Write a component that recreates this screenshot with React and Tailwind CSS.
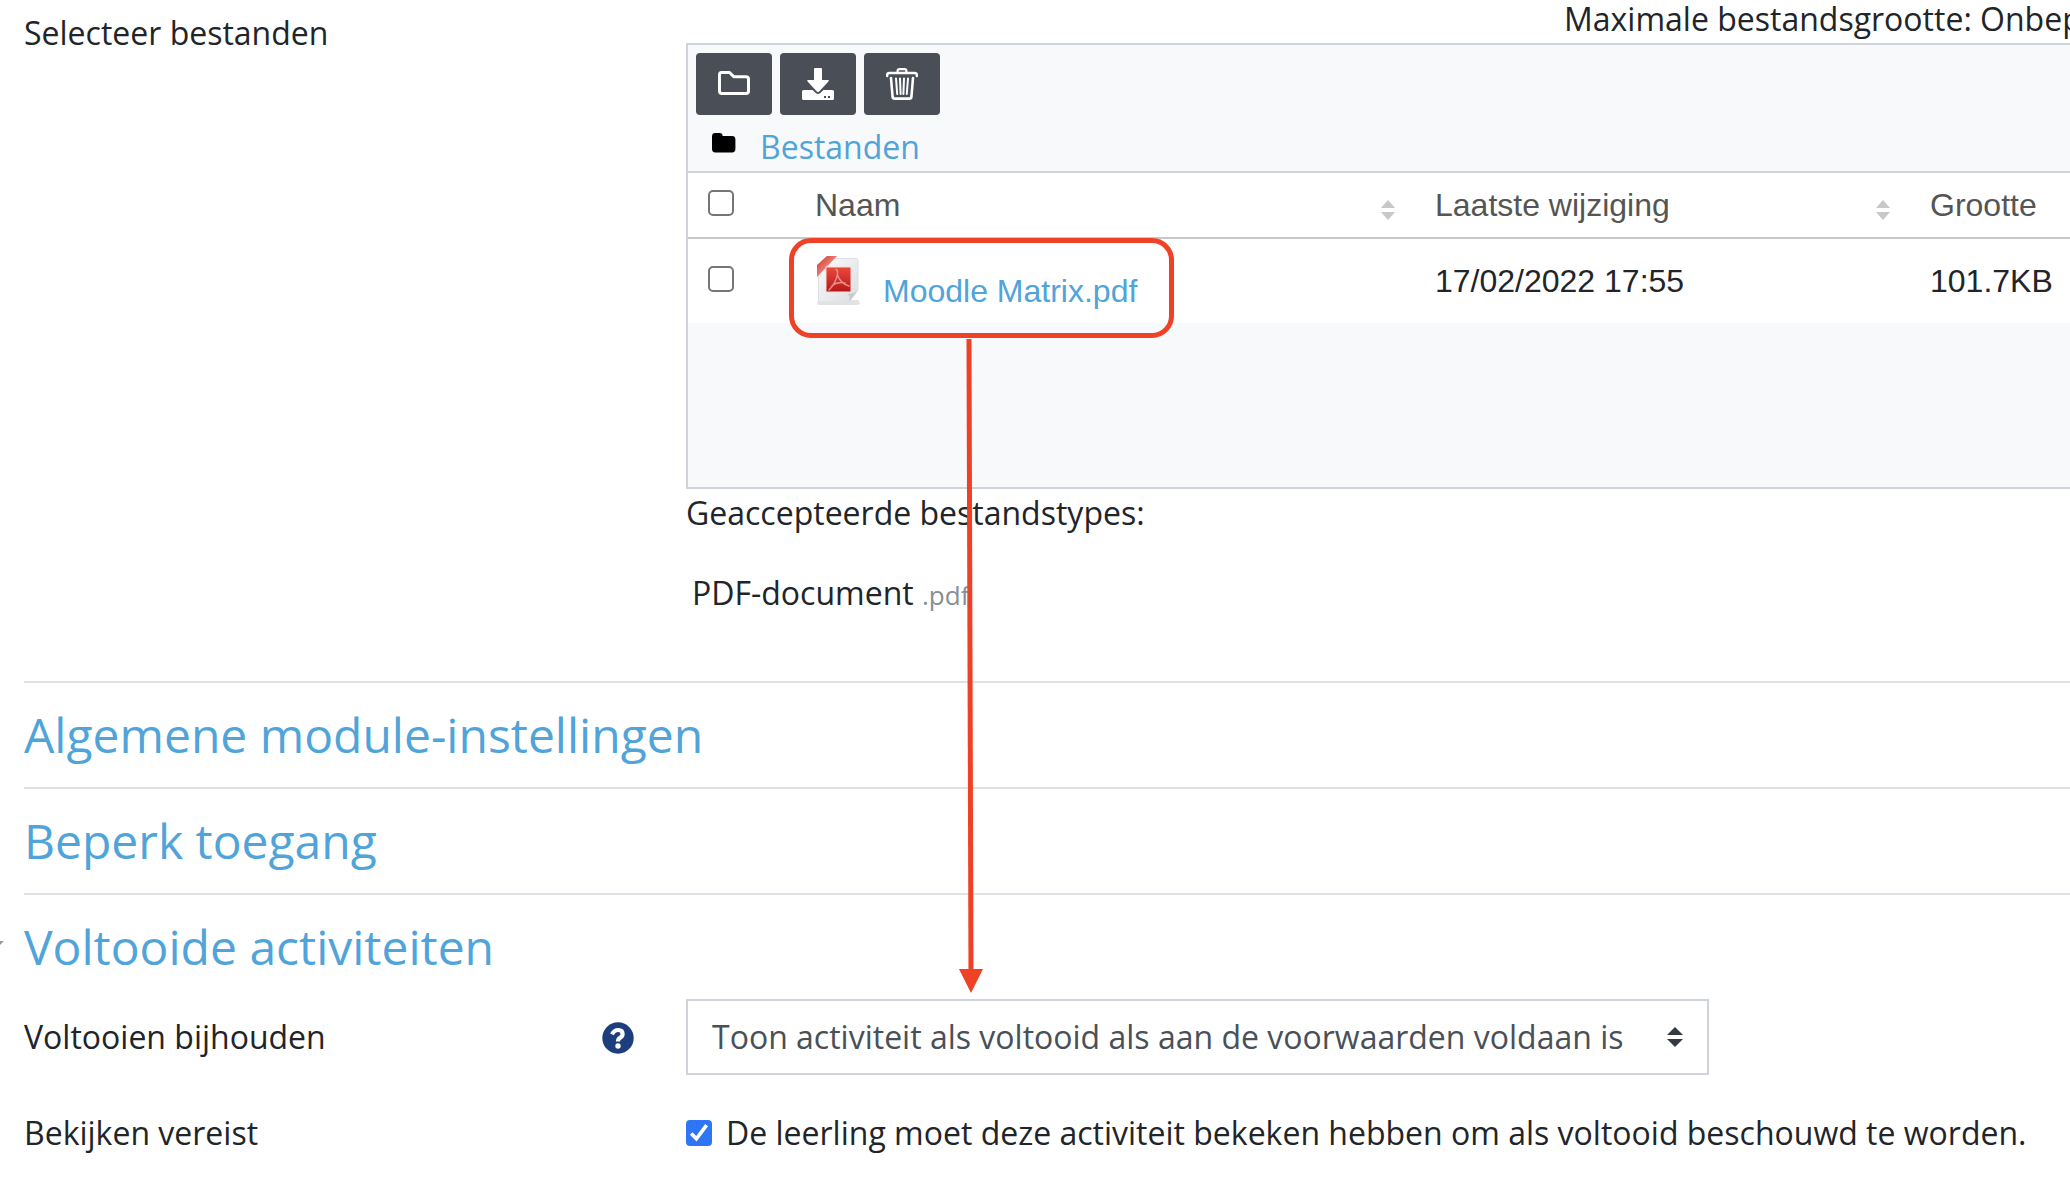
import React from "react";

const files = [
  { name: "Moodle Matrix.pdf", modified: "17/02/2022 17:55", size: "101.7KB" },
];

function FolderOutlineIcon() {
  return (
    <svg viewBox="0 0 32 26" className="h-[26px] w-8" fill="none" stroke="#fff" strokeWidth="3" strokeLinejoin="round" aria-hidden="true">
      <path d="M3.500 1.500H11.500L16 5.800H28Q30.500 5.800 30.500 8.200V20Q30.500 22.500 28 22.500H4Q1.500 22.500 1.500 20V4Q1.500 1.500 3.500 1.500Z" />
    </svg>
  );
}

function DownloadIcon() {
  return (
    <svg viewBox="0 0 32 32" className="size-8" aria-hidden="true">
      <path
        fill="#fff"
        d="M13 0H19Q20 0 20 1V12H26Q27.6 12 26.4 13.4L17.2 23.4Q16 24.6 14.8 23.4L5.6 13.4Q4.4 12 6 12H12V1Q12 0 13 0Z"
      />
      <path
        fill="#fff"
        d="M1.6 22H10.6L14 25.3Q16 26.8 18 25.3L21.4 22H30.4Q32 22 32 23.6V30.4Q32 32 30.4 32H1.6Q0 32 0 30.4V23.6Q0 22 1.6 22Z"
      />
      <path fill="#4a4f57" d="M22 28h2v2h-2zM26 28h2v2h-2z" />
    </svg>
  );
}

function TrashIcon() {
  return (
    <svg viewBox="0 0 32 32" className="size-8" fill="none" stroke="#fff" strokeLinecap="round" strokeLinejoin="round" aria-hidden="true">
      <path strokeWidth="2.4" d="M1.2 8V7Q1.2 5 3.4 5H28.6Q30.8 5 30.8 7V8" />
      <path strokeWidth="2.2" d="M11.6 4V3Q11.6 1.2 13.4 1.2H18.6Q20.4 1.2 20.4 3V4" />
      <path strokeWidth="2.6" d="M5 10L6.6 29Q6.8 30.6 8.6 30.6H23.4Q25.2 30.6 25.4 29L27 10" />
      <path strokeWidth="2" d="M10 10.5L11.2 26M14 10.5L14.6 26M18 10.5L17.4 26M22 10.5L20.8 26" />
    </svg>
  );
}

function FolderIcon() {
  return (
    <svg viewBox="0 0 24 20" className="h-5 w-6" aria-hidden="true">
      <path d="M3.4 0H7.6Q10.6 0 10.6 3H20Q23.4 3 23.4 6.4V16Q23.4 19.4 20 19.4H3.4Q0 19.4 0 16V3.4Q0 0 3.4 0Z" />
    </svg>
  );
}

function PdfIcon() {
  return (
    <svg viewBox="0 0 46 50" className="h-[50px] w-[46px]" aria-hidden="true">
      <defs>
        <linearGradient id="paper" x1="0" y1="0" x2="1" y2="1">
          <stop offset="0" stopColor="#fbfbfc" />
          <stop offset="1" stopColor="#dcdde2" />
        </linearGradient>
        <linearGradient id="badge" x1="0" y1="0" x2="0" y2="1">
          <stop offset="0" stopColor="#ea4a3c" />
          <stop offset="1" stopColor="#b5171a" />
        </linearGradient>
        <linearGradient id="ribbon" x1="0" y1="0" x2="1" y2="1">
          <stop offset="0" stopColor="#c8332d" />
          <stop offset="0.5" stopColor="#ee7a70" />
          <stop offset="1" stopColor="#c9302b" />
        </linearGradient>
      </defs>
      <path fill="#cfcfd1" d="M3 44H43L45 47Q45 49 43 49H4Q2 49 2 47Z" opacity="0.6" />
      <path fill="url(#paper)" stroke="#dfe0e6" strokeWidth="1" d="M9 2.500H41Q43 2.500 43 4.500V34L34 46H6Q3.500 46 3.500 43.500V9Z" />
      <path fill="#c9cad0" d="M43 34L34 46Q35.500 40 33 38Q39 38 43 34Z" />
      <path fill="url(#ribbon)" d="M12 0H22L2 21V9Z" />
      <path fill="url(#badge)" stroke="#f6dcda" strokeWidth="1" d="M11 11H36V36H11Z" />
      <path fill="none" stroke="#ee9088" strokeWidth="1.500" strokeLinecap="round" d="M21 13.500Q23 14 22.500 18Q21 27 14 34M22.500 19Q25 27 34 30M17 29.500Q23 25.500 30 27" />
    </svg>
  );
}

function SortIcon() {
  return (
    <svg viewBox="0 0 14 20" className="h-5 w-[14px]" fill="#c8c8c8" aria-hidden="true">
      <path d="M7 0L14 8H0ZM7 20L0 12H14Z" />
    </svg>
  );
}

function HelpIcon() {
  return (
    <svg viewBox="0 0 32 32" className="size-8" aria-hidden="true">
      <circle cx="16" cy="16" r="15.700" fill="#1d3d7c" />
      <path fill="none" stroke="#fff" strokeWidth="4.200" d="M10 12.400Q12 8 16.200 8Q20.600 8 20.600 12Q20.600 14.400 18 15.800Q16 17 16 19.400" />
      <circle cx="16" cy="24" r="2.700" fill="#fff" />
    </svg>
  );
}

function ToolButton({ label, children }) {
  return (
    <button type="button" aria-label={label} className="flex h-[62px] w-[76px] items-center justify-center rounded bg-[#4a4f57]">
      {children}
    </button>
  );
}

function Tick({ label }) {
  return (
    <input
      type="checkbox"
      aria-label={label}
      className="block size-[26px] appearance-none rounded-[5px] border-2 border-[#767676] bg-white"
    />
  );
}

function SortHeader({ children }) {
  return (
    <th className="p-0 text-left font-normal">
      <div className="flex items-center justify-between pr-10">
        <span>{children}</span>
        <span className="pt-[10px]">
          <SortIcon />
        </span>
      </div>
    </th>
  );
}

function SectionHeading({ children }) {
  return (
    <h2 className="flex h-[106px] items-center border-t-2 border-[#dee2e6] text-5xl leading-[60px]">
      <a href="#" className="text-[#50a4d9]">{children}</a>
    </h2>
  );
}

function FileManager() {
  return (
    <div className="h-[446px] border-2 border-r-0 border-[#ced4da] bg-[#f8f9fb]">
      <div className="flex gap-2 px-2 pt-2">
        <ToolButton label="Map aanmaken"><FolderOutlineIcon /></ToolButton>
        <ToolButton label="Alles downloaden"><DownloadIcon /></ToolButton>
        <ToolButton label="Verwijderen"><TrashIcon /></ToolButton>
      </div>
      <div className="flex h-14 items-center gap-6 pl-6">
        <FolderIcon />
        <a href="#" className="pt-2 leading-[48px] text-[#50a4d9]">Bestanden</a>
      </div>
      <table className="w-full table-fixed border-collapse border-t-2 border-[#ced4da] bg-white font-['Liberation_Sans',Arial,sans-serif]">
        <colgroup>
          <col className="w-[127px]" />
          <col className="w-[620px]" />
          <col className="w-[495px]" />
          <col />
        </colgroup>
        <thead>
          <tr className="h-[66px] border-b-2 border-[#c8c8c8] text-[#555]">
            <th className="p-0 pb-1 pl-5"><Tick label="Alles selecteren" /></th>
            <SortHeader>Naam</SortHeader>
            <SortHeader>Laatste wijziging</SortHeader>
            <th className="p-0 text-left font-normal">Grootte</th>
          </tr>
        </thead>
        <tbody>
          {files.map((f) => (
            <tr key={f.name} className="h-[85px]">
              <td className="p-0 pb-1 pl-5"><Tick label={f.name} /></td>
              <td className="p-0">
                <a href="#" className="relative flex items-center gap-[22px] text-[#50a4d9]">
                  <PdfIcon />
                  <span className="pt-5">{f.name}</span>
                  <span className="absolute -top-[9px] -left-[26px] h-[100px] w-[385px] rounded-[22px] border-5 border-[#ee4126]" />
                </a>
              </td>
              <td className="p-0">{f.modified}</td>
              <td className="p-0">{f.size}</td>
            </tr>
          ))}
        </tbody>
      </table>
    </div>
  );
}

export default function App() {
  return (
    <main className="relative min-h-screen overflow-hidden bg-white pl-6 font-['Open_Sans',sans-serif] text-[32px] leading-[48px] text-[#212529]">
      <div className="grid grid-cols-[662px_minmax(0,1fr)] pb-[62px]">
        <div className="pt-[9px]">Selecteer bestanden</div>
        <div>
          <div className="-mr-[71px] flex justify-end pb-[5px] leading-[38px] whitespace-nowrap">
            Maximale bestandsgrootte: Onbeperkt
          </div>
          <FileManager />
          <p>Geaccepteerde bestandstypes:</p>
          <ul className="pt-8 pl-[6px]">
            <li>
              PDF-document <small className="text-[26px] text-[#868e96]">.pdf</small>
            </li>
          </ul>
        </div>
      </div>

      <SectionHeading>Algemene module-instellingen</SectionHeading>
      <SectionHeading>Beperk toegang</SectionHeading>
      <div className="relative">
        <SectionHeading>Voltooide activiteiten</SectionHeading>
        <svg viewBox="0 0 16 8" className="absolute top-12 -left-9 h-2 w-4" fill="#999" aria-hidden="true">
          <path d="M0 0H16L8 8Z" />
        </svg>
      </div>

      <div className="grid grid-cols-[662px_minmax(0,1fr)] items-center">
        <div className="flex items-center justify-between pr-[52px]">
          <label htmlFor="completion">Voltooien bijhouden</label>
          <button type="button" aria-label="Help" className="pt-[2px]"><HelpIcon /></button>
        </div>
        <div className="relative w-[1023px]">
          <select
            id="completion"
            className="block h-[76px] w-full appearance-none border-2 border-[#ced4da] bg-white pr-16 pl-6 text-[#495057]"
          >
            <option>Toon activiteit als voltooid als aan de voorwaarden voldaan is</option>
          </select>
          <svg viewBox="0 0 16 20" className="pointer-events-none absolute top-7 right-[26px] h-5 w-4" fill="#343a40" aria-hidden="true">
            <path d="M8 0L16 8H0ZM8 20L0 12H16Z" />
          </svg>
        </div>
      </div>

      <div className="grid grid-cols-[662px_minmax(0,1fr)] items-center pt-[34px]">
        <div>Bekijken vereist</div>
        <div className="flex items-center gap-[14px] whitespace-nowrap">
          <span className="relative">
            <input
              id="view"
              type="checkbox"
              defaultChecked
              className="block size-[26px] appearance-none rounded-[4px] bg-[#2f76f6]"
            />
            <svg viewBox="0 0 26 26" className="pointer-events-none absolute inset-0 size-[26px]" fill="none" stroke="#fff" strokeWidth="3.600" aria-hidden="true">
              <path d="M5.200 13.500L10.400 18.800L20.600 5.200" />
            </svg>
          </span>
          <label htmlFor="view">De leerling moet deze activiteit bekeken hebben om als voltooid beschouwd te worden.</label>
        </div>
      </div>

      <svg viewBox="0 0 26 654" className="pointer-events-none absolute top-[339px] left-[958px] h-[654px] w-[26px]" aria-hidden="true">
        <path d="M11 0L13 634" stroke="#ee4126" strokeWidth="5" />
        <path d="M1 630H25L13 654Z" fill="#ee4126" />
      </svg>
    </main>
  );
}
